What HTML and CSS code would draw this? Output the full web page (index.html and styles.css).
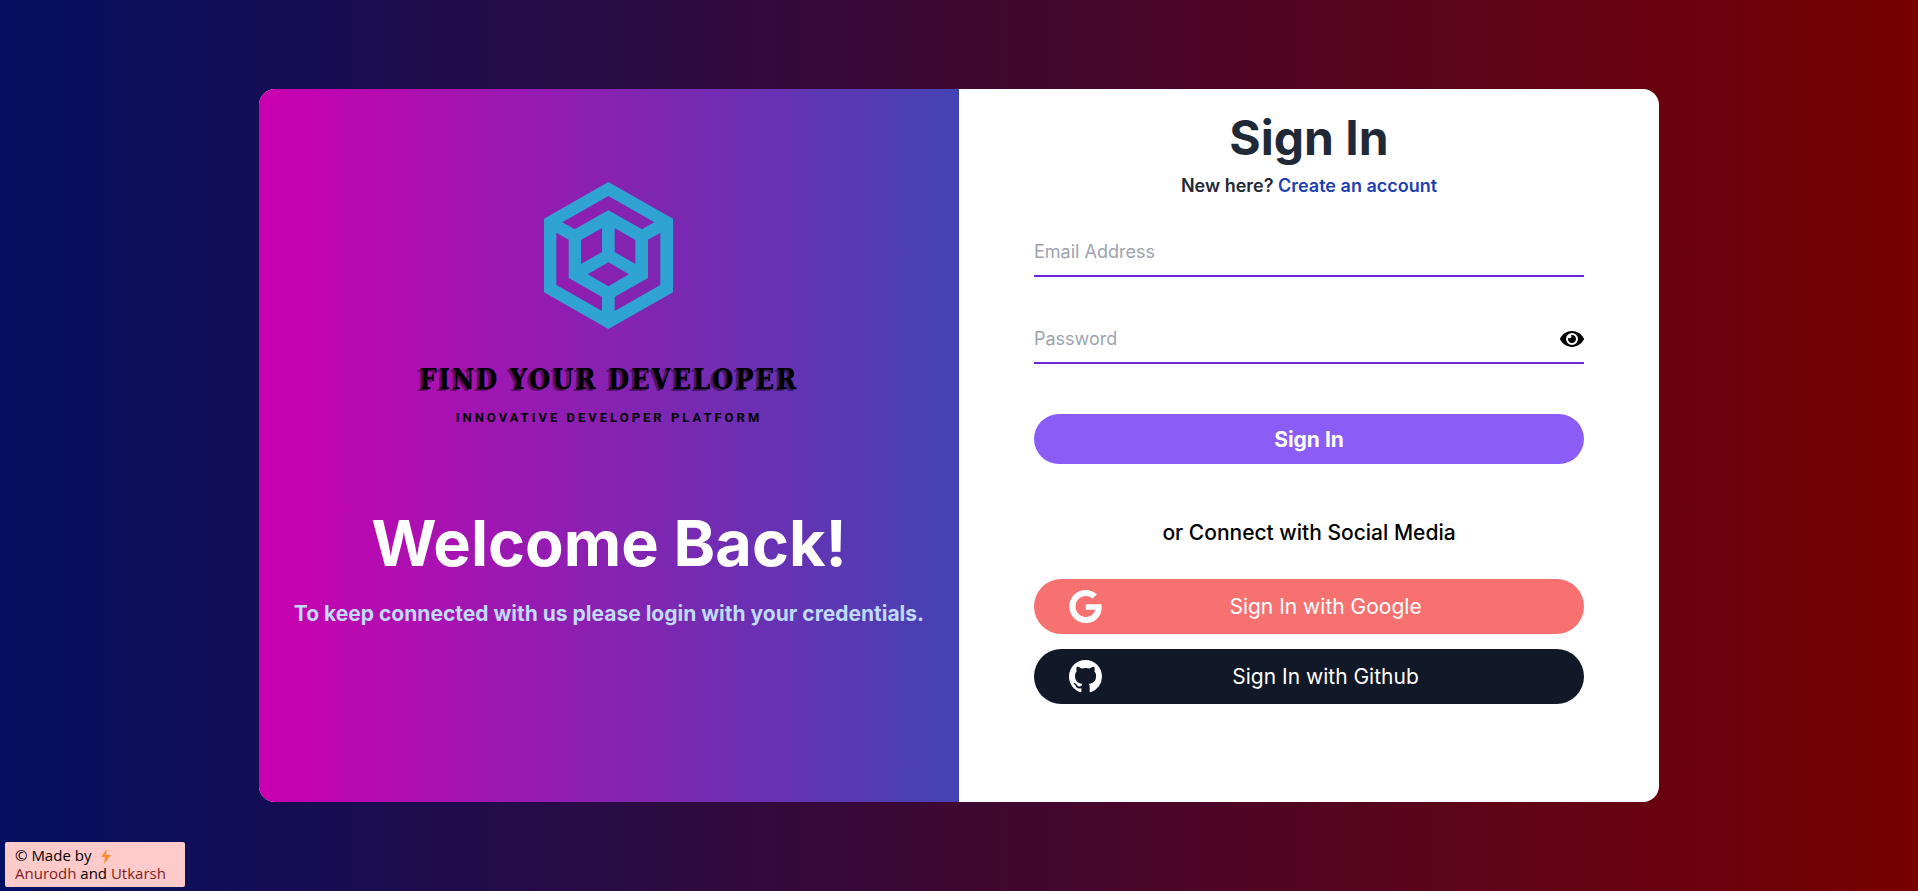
FILE: index.html
```html
<!DOCTYPE html>
<html lang="en">
<head>
<meta charset="utf-8">
<meta name="viewport" content="width=device-width, initial-scale=1">
<title>Sign In</title>
<link rel="stylesheet" href="styles.css">
</head>
<body>
<main class="card">
  <section class="welcome">
    <div class="brand">
      <svg class="brand-mark" viewBox="437 67 387 441" aria-hidden="true">
        <path fill-rule="evenodd" d="M630 67 824 177V398L630 508 437 398V177ZM630 109 492 188 529 209 630 152 731 209 768 188ZM474 219V376L611 454V412L511 355V240ZM786 219V376L649 454V412L749 355V240ZM611 205V277L548 313V241ZM649 205V277L711 313V241ZM630 308 692 344 630 380 568 344Z"/>
      </svg>
      <p class="brand-name">FIND YOUR DEVELOPER</p>
      <p class="brand-tag">INNOVATIVE DEVELOPER PLATFORM</p>
    </div>
    <h1 class="welcome-title">Welcome Back!</h1>
    <p class="welcome-text">To keep connected with us please login with your credentials.</p>
  </section>
  <section class="signin">
    <h2 class="signin-title">Sign In</h2>
    <p class="signup">New here? <a href="#">Create an account</a></p>
    <form class="form">
      <div class="field">
        <input type="email" placeholder="Email Address" aria-label="Email Address">
      </div>
      <div class="field">
        <input type="password" placeholder="Password" aria-label="Password">
        <button class="reveal" type="button" aria-label="Show password">
          <svg viewBox="0 64 576 384" aria-hidden="true"><path d="M572.52 241.4C518.29 135.59 410.93 64 288 64S57.68 135.64 3.48 241.41a32.35 32.35 0 0 0 0 29.19C57.71 376.41 165.07 448 288 448s230.32-71.64 284.52-177.41a32.35 32.35 0 0 0 0-29.19zM288 400a144 144 0 1 1 144-144 143.93 143.93 0 0 1-144 144zm0-240a95.31 95.31 0 0 0-25.31 3.79 47.85 47.85 0 0 1-66.9 66.9A95.78 95.78 0 1 0 288 160z"/></svg>
        </button>
      </div>
      <button class="submit" type="submit">Sign In</button>
    </form>
    <p class="divider">or Connect with Social Media</p>
    <div class="social">
      <button class="social-button google" type="button">
        <svg viewBox="0 8 488 496" aria-hidden="true"><path d="M488 261.8C488 403.3 391.1 504 248 504 110.8 504 0 393.2 0 256S110.8 8 248 8c66.8 0 123 24.5 166.3 64.9l-67.5 64.9C258.5 52.6 94.3 116.6 94.3 256c0 86.5 69.1 156.6 153.7 156.6 98.2 0 135-70.4 140.8-106.9H248v-85.3h236.1c2.3 12.7 3.9 24.9 3.9 41.4z"/></svg>
        <span>Sign In with Google</span>
      </button>
      <button class="social-button github" type="button">
        <svg viewBox="0 0 16 16" aria-hidden="true"><path d="M8 0C3.58 0 0 3.58 0 8c0 3.54 2.29 6.53 5.47 7.59.4.07.55-.17.55-.38 0-.19-.01-.82-.01-1.49-2.01.37-2.53-.49-2.69-.94-.09-.23-.48-.94-.82-1.13-.28-.15-.68-.52-.01-.53.63-.01 1.08.58 1.23.82.72 1.21 1.87.87 2.33.66.07-.52.28-.87.51-1.07-1.78-.2-3.64-.89-3.64-3.95 0-.87.31-1.59.82-2.15-.08-.2-.36-1.02.08-2.12 0 0 .67-.21 2.2.82.64-.18 1.32-.27 2-.27s1.36.09 2 .27c1.53-1.04 2.2-.82 2.2-.82.44 1.1.16 1.92.08 2.12.51.56.82 1.27.82 2.15 0 3.07-1.87 3.75-3.65 3.95.29.25.54.73.54 1.48 0 1.07-.01 1.93-.01 2.2 0 .21.15.46.55.38A8.01 8.01 0 0 0 16 8c0-4.42-3.58-8-8-8z"/></svg>
        <span>Sign In with Github</span>
      </button>
    </div>
  </section>
</main>
<footer class="credit">
  <div>© Made by <svg class="bolt" viewBox="0 0 10 15" aria-hidden="true"><path d="M6 0 0 8H4L3 15 10 6H5Z"/></svg></div>
  <div><a href="#">Anurodh</a> and <a href="#">Utkarsh</a></div>
</footer>
</body>
</html>
```
FILE: styles.css
```css
* {
  box-sizing: border-box;
}

body {
  margin: 0;
  min-height: 100vh;
  display: flex;
  align-items: center;
  justify-content: center;
  background: linear-gradient(to right, #041062, #780002);
  font-family: Inter, "Liberation Sans", sans-serif;
}

h1, h2, p {
  margin: 0;
}

a {
  text-decoration: none;
}

button, input {
  font: inherit;
}

button {
  border: 0;
  cursor: pointer;
}

.card {
  display: grid;
  grid-template-columns: 1fr 1fr;
  width: 73%;
  min-height: 80vh;
  border-radius: 16px;
  overflow: hidden;
  background: #fff;
}

.welcome {
  padding: 93px 16px 32px;
  text-align: center;
  background: linear-gradient(to right, #cc00b0, #4343b4);
}

.brand {
  display: flex;
  flex-direction: column;
  align-items: center;
  color: #000;
}

.brand-mark {
  width: 129px;
  height: 147px;
  fill: #2fa4d2;
}

.brand-name {
  margin-top: 33px;
  font: 700 27px/36px "DejaVu Serif Condensed", "DejaVu Serif", serif;
  letter-spacing: 2px;
  text-shadow: -1px 1px rgba(0, 0, 0, 0.3), -3px 2px rgba(0, 0, 0, 0.4);
}

.brand-tag {
  margin-top: 10px;
  font: 700 13px/20px Roboto, "Liberation Sans", sans-serif;
  letter-spacing: 3px;
}

.welcome-title {
  margin-top: 75px;
  font-size: 63px;
  line-height: 80px;
  color: #fff;
}

.welcome-text {
  margin-top: 17px;
  font-size: 21px;
  font-weight: 700;
  line-height: 28px;
  color: #bfdbfe;
}

.signin {
  padding: 25px 75px 24px;
  text-align: center;
}

.signin-title {
  font-size: 48px;
  line-height: 48px;
  color: #1f2937;
}

.signup {
  margin-top: 12px;
  font-size: 18px;
  font-weight: 600;
  line-height: 24px;
  color: #1f2937;
}

.signup a {
  color: #1e40af;
}

.form {
  margin-top: 27px;
}

.field {
  display: flex;
  align-items: center;
  height: 52px;
  margin-bottom: 35px;
  border-bottom: 2px solid #6d28d9;
}

.field input {
  flex: 1;
  min-width: 0;
  height: 100%;
  padding: 2px 0 0;
  border: 0;
  outline: 0;
  background: transparent;
  font-size: 18px;
}

.field input::placeholder {
  color: #9ca3af;
}

.reveal {
  display: flex;
  padding: 4px 0 0;
  background: transparent;
}

.reveal svg {
  width: 24px;
  height: 16px;
}

.submit {
  width: 100%;
  height: 50px;
  margin-top: 15px;
  border-radius: 25px;
  background: #8b5cf6;
  color: #fff;
  font-size: 21px;
  font-weight: 700;
}

.divider {
  margin-top: 55px;
  font-size: 21px;
  font-weight: 500;
  line-height: 28px;
}

.social {
  display: grid;
  gap: 15px;
  margin-top: 32px;
}

.social-button {
  display: flex;
  align-items: center;
  height: 55px;
  padding: 0 35px;
  border-radius: 28px;
  color: #fff;
  font-size: 21px;
}

.social-button svg {
  width: 33px;
  height: 33px;
  fill: currentColor;
}

.social-button span {
  flex: 1;
}

.google {
  background: #f87171;
}

.github {
  background: #111827;
}

.credit {
  position: fixed;
  left: 5px;
  bottom: 4px;
  width: 180px;
  padding: 4px 10px 5px;
  border-radius: 2px;
  background: #fecaca;
  font: 15px/18px "Open Sans", "Noto Sans", sans-serif;
}

.credit a {
  color: #7f1d1d;
}

.bolt {
  width: 10px;
  height: 15px;
  margin-left: 6px;
  vertical-align: -3px;
  fill: #ff8a2b;
}
```
